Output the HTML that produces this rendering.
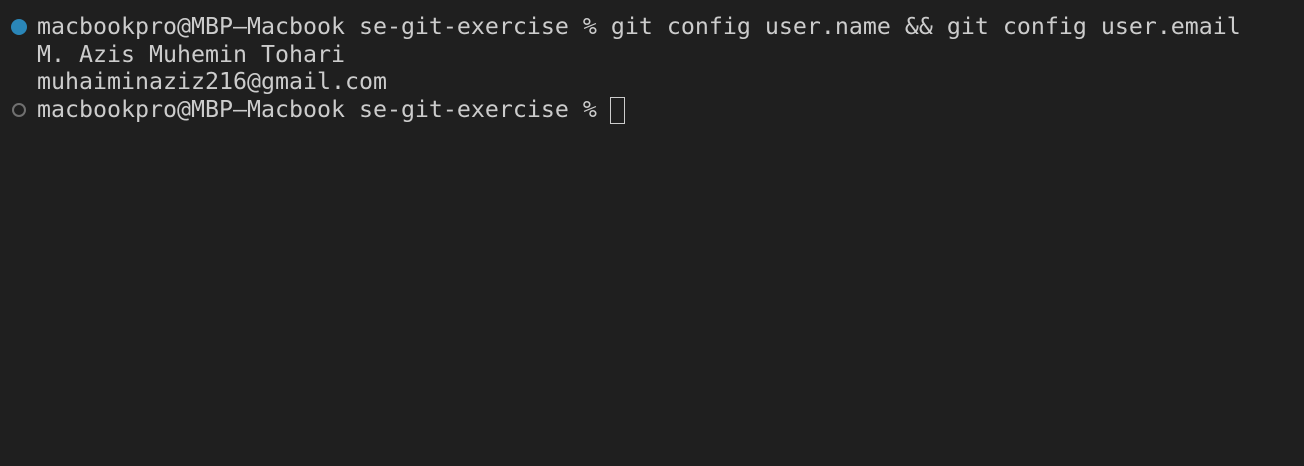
<!DOCTYPE html>
<html><head><style>
body{margin:0;width:1304px;height:466px;background:#1f1f1f;overflow:hidden;position:relative}
.l{position:absolute;left:37px;font-family:"DejaVu Sans Mono","Liberation Mono",monospace;font-size:23.25px;color:#cccccc;white-space:pre;line-height:28px}
</style></head><body>
<div style="position:absolute;left:11px;top:19px;width:16px;height:16px;border-radius:50%;background:#2a86b8"></div>
<div class="l" style="top:13px">macbookpro@MBP—Macbook se-git-exercise % git config user.name &amp;&amp; git config user.email</div>
<div class="l" style="top:41px">M. Azis Muhemin Tohari</div>
<div class="l" style="top:68px">muhaiminaziz216@gmail.com</div>
<div style="position:absolute;left:12px;top:103px;width:10px;height:10px;border-radius:50%;border:2px solid #707070"></div>
<div class="l" style="top:96px">macbookpro@MBP—Macbook se-git-exercise % </div>
<div style="position:absolute;left:610px;top:97px;width:15px;height:27px;border:1.5px solid #cccccc;box-sizing:border-box"></div>
</body></html>
